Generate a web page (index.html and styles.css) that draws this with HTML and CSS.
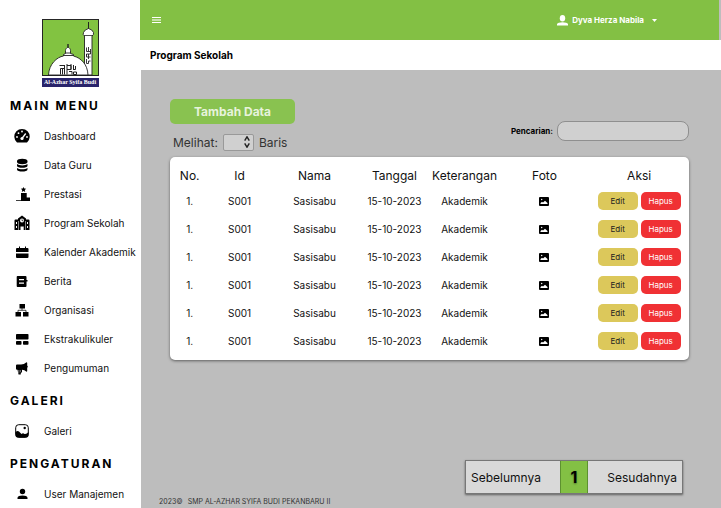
FILE: index.html
```html
<!DOCTYPE html>
<html lang="id">
<head>
<meta charset="utf-8">
<title>Program Sekolah</title>
<link rel="stylesheet" href="styles.css">
</head>
<body>
<svg class="sprite" aria-hidden="true">
  <symbol id="photo" viewBox="0 0 10 9"><rect width="10" height="9" rx="1"/><path d="M1.500 7V6L3 4.700l1 .8L6 3.800 8.500 6v1z" fill="#fff"/><circle cx="2.700" cy="2.500" r=".7" fill="#fff"/></symbol>
</svg>
<div class="app">
  <aside class="sidebar">
    <div class="brand">
      <svg class="brand-mark" viewBox="0 0 57 57" aria-hidden="true">
        <rect x=".5" y=".5" width="56" height="56" fill="#82c341" stroke="#262626"/>
        <path d="M42.500 56V17q-2-1-1-3.500 1-3 5-4V3v6.500q4 1 5 4 .5 2.500-1.500 3.500V56z" fill="#fff" stroke="#222" stroke-width=".9"/>
        <path d="M42 16.500h9" stroke="#222" stroke-width=".8"/>
        <path d="M6.500 56C7 45 15 38 21.500 37v-1.500l2-1v-3c0-1.500 1-2.500 2.500-3.500V25v3c1.500 1 2.500 2 2.500 3.500v3l3 1V37C39 39 45.500 45 46 56z" fill="#fff" stroke="#222" stroke-width=".9"/>
        <path d="M21.500 36.500h10M23.500 34h5" stroke="#222" stroke-width=".9"/>
        <path d="M17.500 46.500h5v3h-4v6M20.500 49.500v6M22.500 46v9.500M25 45v10.500M25 46.500h4v4h-4M29 45v5.500M27 52.500h3v3M31.500 46v5M33.500 47v3.500h-2M31.500 53h3v2.500h-3z" fill="none" stroke="#222" stroke-width="1"/>
        <path d="M44.500 28.500v4h4M46.500 28v4M48.500 30v5h-4v3h4M46.500 35v5M44.500 40v4.500h2V42h2M44.500 37v-2" fill="none" stroke="#222" stroke-width=".9"/>
        <path d="M1 56.500h55" stroke="#222"/>
      </svg>
      <div class="brand-name">Al-Azhar Syifa Budi</div>
    </div>
    <nav>
      <h2 class="nav-title">MAIN MENU</h2>
      <a class="nav-item" href="#"><svg viewBox="0 0 16 16"><path d="M3 14.500A7.700 7.700 0 1 1 13 14.500z"/><g fill="#fff"><circle cx="3" cy="9" r=".9"/><circle cx="4.500" cy="5.200" r=".9"/><circle cx="8" cy="3.500" r=".9"/><circle cx="13" cy="9" r=".9"/><circle cx="8" cy="10.500" r="1.600"/></g><path d="M8 10.500l3.700-5" stroke="#fff" stroke-width="1.300"/></svg>Dashboard</a>
      <a class="nav-item" href="#"><svg viewBox="0 0 16 16"><path d="M3 4c0-3 10.500-3 10.500 0v1c0 3-10.500 3-10.500 0zM3 7.100c2 1.700 8.500 1.700 10.500 0v1.700c0 2.700-10.500 2.700-10.500 0zM3 11c2 1.700 8.500 1.700 10.500 0v1.500c0 2.700-10.500 2.700-10.500 0z"/></svg>Data Guru</a>
      <a class="nav-item" href="#"><svg viewBox="0 0 16 16"><path d="M9.500 1l.8 1.600 1.900.2-1.400 1.300.4 1.900-1.700-1-1.700 1 .4-1.900-1.400-1.300 1.900-.2zM7 7h5.700v4.500H16V15H7zM2 14.200h5v.8H2z"/></svg>Prestasi</a>
      <a class="nav-item" href="#"><svg viewBox="0 0 16 16"><path d="M.500 5.500Q.500 4.500 1.500 4.500H4V3.500L8 .5l4 3v1h2.500q1 0 1 1V15H9.700v-3.500H6.500V15h-6z"/><circle cx="8" cy="5.500" r="2" fill="#fff"/><path d="M8 4.300v1.400h1.200" fill="none" stroke="#000" stroke-width=".7"/><path d="M2 7h1v2H2zM2 11h1v2H2zM13 7h1v2h-1zM13 11h1v2h-1zM4.400 6h.5v9h-.5zM11.200 6h.5v9h-.5z" fill="#fff"/></svg>Program Sekolah</a>
      <a class="nav-item" href="#"><svg viewBox="0 0 16 16"><path d="M2 8V5q0-1 1-1h2V2.500h1V4h5V2.500h1V4h1.500q1 0 1 1v3zM2 9.500h12.500V13q0 1-1 1H3q-1 0-1-1z"/></svg>Kalender Akademik</a>
      <a class="nav-item" href="#"><svg viewBox="0 0 16 16"><path d="M3.500 3h8q1 0 1 1v3h1v1.500h-1V13q0 1-1 1h-8q-.8 0-.8-1V4q0-1 .8-1z"/><path d="M5 6h5v1.300H5zM5 9.500h5v1.300H5z" fill="#fff"/></svg>Berita</a>
      <a class="nav-item" href="#"><svg viewBox="0 0 16 16"><path d="M5.500 2h5.500v4.500H5.500zM1.500 10H7V14.500H1.500zM9 10h5.500v4.500H9z"/><path d="M8 6v2.300M4 10V8.300h8V10" fill="none" stroke="#000" stroke-width=".7"/></svg>Organisasi</a>
      <a class="nav-item" href="#"><svg viewBox="0 0 16 16"><rect x="2" y="3" width="12.500" height="5.500" rx=".8"/><rect x="2" y="10" width="5.500" height="3.700" rx=".8"/><rect x="9" y="10" width="5.500" height="3.700" rx=".8"/></svg>Ekstrakulikuler</a>
      <a class="nav-item" href="#"><svg viewBox="0 0 16 16"><path d="M2 5.500q0-1 1-1h4q3 0 5.500-2.300.7 0 .7.800v2.500q1.300.8 0 2.500V11q0 .7-.7.700Q10.500 10 8 9.800V12q0 .5-.5.500h-.7v1.500q0 .500-.500.500H5q-.5 0-.6-.5L3.500 9.800H3q-1 0-1-1z"/><path d="M4.800 10v3.300M6.300 10v2" stroke="#fff" stroke-width=".5"/></svg>Pengumuman</a>
      <h2 class="nav-title">GALERI</h2>
      <a class="nav-item" href="#"><svg viewBox="0 0 16 16"><rect x="1.700" y="1.700" width="12.600" height="12.600" rx="3" fill="#fff" stroke="#000" stroke-width="1"/><path d="M1.500 9q2-1.500 3.500-.5L7.500 11Q9 9.500 10.500 11q2 .5 4-2v3q0 2.500-2.500 2.500H4Q1.500 14.500 1.500 12z"/><circle cx="10.700" cy="5" r="1.200"/></svg>Galeri</a>
      <h2 class="nav-title">PENGATURAN</h2>
      <a class="nav-item" href="#"><svg viewBox="0 0 16 16"><circle cx="8.500" cy="5.500" r="2.700"/><path d="M3.500 13v-1.200Q4 9.500 8.500 9.500t5 2.300V13z"/></svg>User Manajemen</a>
    </nav>
  </aside>
  <div class="page">
    <header class="topbar">
      <button class="menu-button" aria-label="Menu"><svg viewBox="0 0 9 6"><path d="M0 .5h9M0 5.500h9" stroke="#fff"/><path d="M0 3h9" stroke="#fff" stroke-opacity=".55" stroke-width="2"/></svg></button>
      <button class="user-button"><svg class="user-icon" viewBox="0 0 11 11"><ellipse cx="5.500" cy="3.200" rx="2.700" ry="3.200"/><path d="M0 10.500V9Q1 7.200 5.500 7.200T11 9v1.500z"/></svg>Dyva Herza Nabila<svg class="caret" viewBox="0 0 5 3"><path d="M0 0h5L2.500 3z"/></svg></button>
    </header>
    <h1 class="page-title">Program Sekolah</h1>
    <main class="content">
      <div class="tools">
        <div class="tools-left">
          <button class="add-button">Tambah Data</button>
          <div class="rows-control">
            <label for="rows">Melihat:</label>
            <span class="select-box">
              <select id="rows"><option label=" "></option></select>
              <svg viewBox="0 0 6 12" aria-hidden="true"><path d="M.7 4.700L3 .8l2.300 3.900M.7 7.300L3 11.200l2.300-3.900" fill="none" stroke="#222" stroke-width="1.400"/></svg>
            </span>
            <span>Baris</span>
          </div>
        </div>
        <div class="search">
          <label for="search">Pencarian:</label>
          <input id="search" type="text">
        </div>
      </div>
      <div class="card">
        <table>
          <colgroup><col class="c-no"><col class="c-id"><col class="c-name"><col class="c-date"><col class="c-info"><col class="c-photo"><col class="c-action"></colgroup>
          <thead><tr><th>No.</th><th>Id</th><th>Nama</th><th>Tanggal</th><th>Keterangan</th><th>Foto</th><th>Aksi</th></tr></thead>
          <tbody>
            <tr><td>1.</td><td>S001</td><td>Sasisabu</td><td>15-10-2023</td><td>Akademik</td><td><svg class="photo"><use href="#photo"/></svg></td><td><div class="actions"><button class="edit">Edit</button><button class="delete">Hapus</button></div></td></tr>
            <tr><td>1.</td><td>S001</td><td>Sasisabu</td><td>15-10-2023</td><td>Akademik</td><td><svg class="photo"><use href="#photo"/></svg></td><td><div class="actions"><button class="edit">Edit</button><button class="delete">Hapus</button></div></td></tr>
            <tr><td>1.</td><td>S001</td><td>Sasisabu</td><td>15-10-2023</td><td>Akademik</td><td><svg class="photo"><use href="#photo"/></svg></td><td><div class="actions"><button class="edit">Edit</button><button class="delete">Hapus</button></div></td></tr>
            <tr><td>1.</td><td>S001</td><td>Sasisabu</td><td>15-10-2023</td><td>Akademik</td><td><svg class="photo"><use href="#photo"/></svg></td><td><div class="actions"><button class="edit">Edit</button><button class="delete">Hapus</button></div></td></tr>
            <tr><td>1.</td><td>S001</td><td>Sasisabu</td><td>15-10-2023</td><td>Akademik</td><td><svg class="photo"><use href="#photo"/></svg></td><td><div class="actions"><button class="edit">Edit</button><button class="delete">Hapus</button></div></td></tr>
            <tr><td>1.</td><td>S001</td><td>Sasisabu</td><td>15-10-2023</td><td>Akademik</td><td><svg class="photo"><use href="#photo"/></svg></td><td><div class="actions"><button class="edit">Edit</button><button class="delete">Hapus</button></div></td></tr>
          </tbody>
        </table>
      </div>
      <div class="pagination">
        <button class="prev">Sebelumnya</button>
        <button class="current">1</button>
        <button class="next">Sesudahnya</button>
      </div>
    </main>
    <footer class="footer"><span>2023©</span><span>SMP AL-AZHAR SYIFA BUDI PEKANBARU II</span></footer>
  </div>
</div>
</body>
</html>
```
FILE: styles.css
```css
* { box-sizing: border-box; }

body {
  margin: 0;
  font-family: Inter, "Liberation Sans", sans-serif;
  font-size: 10px;
  color: #111;
}

button, input, select { font: inherit; color: inherit; margin: 0; }

button { border: 0; padding: 0; cursor: pointer; }

.sprite { position: absolute; width: 0; height: 0; }

.app {
  display: grid;
  grid-template-columns: 140px 1fr;
  min-height: 100vh;
}

/* Sidebar */
.sidebar { background: #fff; }

.brand {
  display: flex;
  flex-direction: column;
  align-items: center;
  gap: 2px;
  height: 91px;
  padding-top: 19px;
}

.brand-mark { width: 57px; height: 57px; }

.brand-name {
  width: 57px;
  height: 9px;
  background: #29246b;
  color: #fff;
  font: bold 6px/9px "Liberation Serif", serif;
  text-align: center;
  white-space: nowrap;
}

.nav-title {
  margin: 4px 0 0;
  padding-left: 10px;
  font-size: 12px;
  font-weight: 700;
  line-height: 30px;
  letter-spacing: 2px;
  color: #000;
}

.nav-title:first-child { margin-top: 0; }

.nav-item {
  display: flex;
  align-items: center;
  gap: 14px;
  height: 29px;
  padding-left: 14px;
  color: #111;
  text-decoration: none;
  white-space: nowrap;
}

.nav-item svg { width: 16px; height: 16px; flex: none; }

/* Header */
.page {
  display: flex;
  flex-direction: column;
  min-width: 0;
  background: #bdbdbd;
}

.topbar {
  display: flex;
  justify-content: space-between;
  align-items: center;
  height: 40px;
  margin-right: 2px;
  padding: 0 62px 0 12px;
  background: #83c044;
  color: #fff;
}

.menu-button, .user-button { background: none; }

.menu-button svg { display: block; width: 9px; height: 6px; }

.user-button {
  display: flex;
  align-items: center;
  gap: 4px;
  font-size: 8px;
  font-weight: 700;
}

.user-button svg { fill: #fff; }
.user-icon { width: 11px; height: 11px; }
.caret { width: 5px; height: 3px; margin-left: 4px; }

.page-title {
  margin: 0;
  padding-left: 10px;
  background: #fff;
  font-size: 10px;
  font-weight: 700;
  line-height: 30px;
  color: #000;
}

/* Content */
.content {
  flex: 1;
  display: flex;
  flex-direction: column;
  padding: 29px 32px 0 29px;
}

.content, .footer { border-left: 1px solid #fff; }

.tools {
  display: flex;
  justify-content: space-between;
  align-items: flex-end;
}

.add-button {
  display: block;
  width: 125px;
  height: 25px;
  border-radius: 5px;
  background: #89c250;
  color: #e7f3dc;
  font-size: 12px;
  font-weight: 700;
}

.rows-control {
  display: flex;
  align-items: center;
  gap: 5px;
  margin-top: 10px;
  padding-left: 3px;
  font-size: 12px;
  line-height: 17px;
  color: #333;
}

.select-box { position: relative; display: flex; }

.select-box select {
  appearance: none;
  width: 31px;
  height: 17px;
  border: 1px solid #999;
  border-radius: 2px;
  background: #d0d0d0;
}

.select-box svg {
  position: absolute;
  top: 2px;
  right: 4px;
  width: 6px;
  height: 12px;
  pointer-events: none;
}

.search {
  display: flex;
  align-items: center;
  gap: 4px;
  padding-bottom: 10px;
  font-size: 8px;
  font-weight: 700;
  color: #000;
}

.search input {
  width: 132px;
  height: 20px;
  padding: 0 8px;
  border: 1px solid #8f8f8f;
  border-radius: 8px;
  background: #d0d0d0;
  font-weight: 400;
}

.card {
  margin-top: 6px;
  padding: 6px 0 5px;
  border-radius: 5px;
  background: #fff;
  box-shadow: 0 1px 3px rgba(0, 0, 0, .5);
}

table {
  width: 100%;
  table-layout: fixed;
  border-collapse: collapse;
  text-align: center;
  white-space: nowrap;
}

.c-no { width: 7.6%; }
.c-id { width: 11.6%; }
.c-name { width: 17.3%; }
.c-date { width: 13.5%; }
.c-info { width: 13.5%; }
.c-photo { width: 17.3%; }
.c-action { width: 19.2%; }

th, td { padding: 0; }
th { height: 24px; font-size: 12px; font-weight: 400; }
td { height: 28px; }

.photo { display: block; width: 10px; height: 9px; margin: 0 auto; }

.actions { display: flex; justify-content: center; gap: 3px; }

.actions button {
  width: 40px;
  height: 18px;
  border-radius: 5px;
  font-size: 8px;
}

.edit { background: #dcc85b; color: #222; }
.delete { background: #f03134; color: #fff; }

.pagination {
  display: flex;
  align-self: flex-end;
  height: 34px;
  margin: auto 6px 2px 0;
  border: 1px solid #777;
  background: #d9d9d9;
  box-shadow: 0 1px 2px rgba(0, 0, 0, .5);
  font-size: 12px;
}

.prev, .next { width: 94px; padding: 0 5px; background: none; }
.prev { text-align: left; }
.next { text-align: right; }

.current {
  width: 28px;
  border: solid #5d9130;
  border-width: 0 1px;
  background: #83c044;
  color: #000;
  font-size: 16px;
  font-weight: 700;
  text-shadow: 0 1px 2px rgba(0, 0, 0, .4);
}

.footer {
  display: flex;
  gap: 5px;
  padding-left: 18px;
  font-size: 7px;
  line-height: 12px;
  color: #333;
}
```
